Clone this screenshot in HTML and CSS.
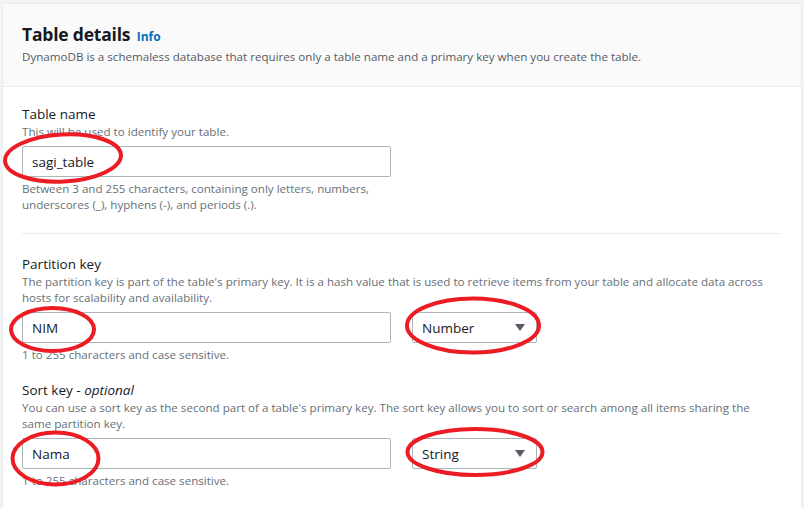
FILE: index.html
```html
<!DOCTYPE html>
<html>
<head>
<meta charset="utf-8">
<link rel="stylesheet" href="styles.css">
</head>
<body>
<div class="card">
  <div class="card-header">
    <h2 class="title">Table details <span class="info">Info</span></h2>
    <p class="header-desc">DynamoDB is a schemaless database that requires only a table name and a primary key when you create the table.</p>
  </div>
  <div class="card-body">
    <div class="field">
      <div class="label">Table name</div>
      <div class="helper">This will be used to identify your table.</div>
      <div class="control-row">
        <div class="input">sagi_table</div>
      </div>
      <div class="constraint">Between 3 and 255 characters, containing only letters, numbers,<br>underscores (_), hyphens (-), and periods (.).</div>
    </div>
    <hr class="divider">
    <div class="field">
      <div class="label">Partition key</div>
      <div class="helper">The partition key is part of the table's primary key. It is a hash value that is used to retrieve items from your table and allocate data across hosts for scalability and availability.</div>
      <div class="control-row">
        <div class="input">NIM</div>
        <div class="select"><span>Number</span><svg class="caret" width="10" height="7" viewBox="0 0 10 7"><path d="M0 0 H10 L5 7 Z" fill="#545b64"/></svg></div>
      </div>
      <div class="constraint">1 to 255 characters and case sensitive.</div>
    </div>
    <div class="field field-sort">
      <div class="label">Sort key - <i>optional</i></div>
      <div class="helper">You can use a sort key as the second part of a table's primary key. The sort key allows you to sort or search among all items sharing the same partition key.</div>
      <div class="control-row">
        <div class="input">Nama</div>
        <div class="select"><span>String</span><svg class="caret" width="10" height="7" viewBox="0 0 10 7"><path d="M0 0 H10 L5 7 Z" fill="#545b64"/></svg></div>
      </div>
      <div class="constraint">1 to 255 characters and case sensitive.</div>
    </div>
  </div>
</div>
<svg class="marks" width="804" height="508" viewBox="0 0 804 508">
  <g fill="none" stroke="#ec1c24" stroke-width="4">
    <ellipse cx="63" cy="158" rx="58" ry="23.5" transform="rotate(-3 63 158)"/>
    <ellipse cx="52.5" cy="329.5" rx="41.5" ry="21.5"/>
    <ellipse cx="473" cy="325.5" rx="66" ry="27"/>
    <ellipse cx="55.5" cy="458.5" rx="43" ry="26"/>
    <ellipse cx="475" cy="452" rx="67.5" ry="23"/>
  </g>
</svg>
</body>
</html>
```

FILE: styles.css
```css
html, body {
  margin: 0;
  padding: 0;
  background: #f2f3f3;
  font-family: "Open Sans", "Noto Sans", sans-serif;
  color: #16191f;
  overflow: hidden;
}
.card {
  margin: 3px 2px 0 2px;
  background: #ffffff;
  border: 1px solid #eaeded;
  height: 520px;
}
.card-header {
  background: #fafafa;
  border-bottom: 1px solid #eaeded;
  padding: 18px 20px 21px 19px;
}
.title {
  margin: 0;
  font-size: 17.5px;
  line-height: 24px;
  font-weight: 700;
  letter-spacing: -0.2px;
}
.info {
  font-size: 12px;
  font-weight: 700;
  color: #0073bb;
  margin-left: 2px;
  letter-spacing: 0;
}
.header-desc {
  margin: 0;
  font-size: 11.6px;
  line-height: 16px;
  color: #545b64;
}
.card-body {
  padding: 17px 20px 0 19px;
}
.field {
  display: flex;
  flex-direction: column;
}
.label {
  font-size: 13.5px;
  line-height: 20px;
}
.helper {
  font-size: 11.6px;
  line-height: 16px;
  color: #687078;
}
.control-row {
  display: flex;
  gap: 21px;
  margin-top: 6px;
}
.input, .select {
  box-sizing: border-box;
  height: 31px;
  border: 1px solid #aab7b8;
  border-radius: 2px;
  font-size: 13.5px;
  display: flex;
  align-items: center;
  padding: 0 9px;
}
.input {
  width: 369px;
}
.select {
  width: 125px;
  justify-content: space-between;
  padding-right: 11px;
}
.constraint {
  margin-top: 4px;
  font-size: 11.6px;
  line-height: 16px;
  color: #687078;
}
.divider {
  border: 0;
  border-top: 1px solid #eaeded;
  margin: 20px 0 20px 0;
}
.field-sort {
  margin-top: 17px;
}
.marks {
  position: absolute;
  left: 0;
  top: 0;
  pointer-events: none;
}
```
